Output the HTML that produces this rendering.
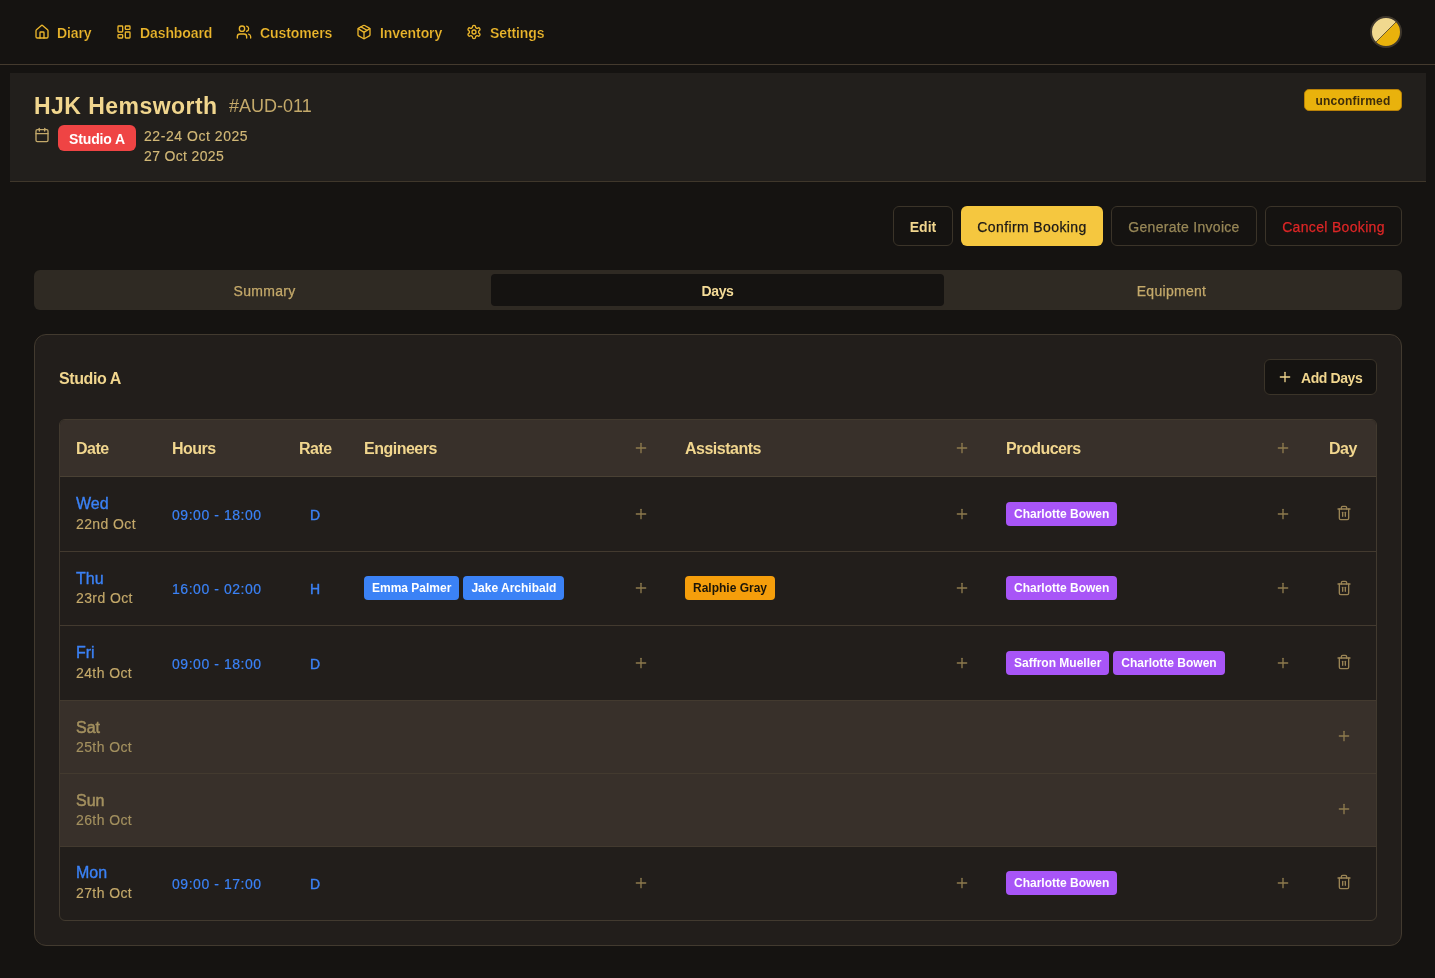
<!DOCTYPE html>
<html><head><meta charset="utf-8">
<style>
*{box-sizing:border-box;margin:0;padding:0}
html,body{width:1435px;height:978px;overflow:hidden;background:#151311;font-family:"Liberation Sans",sans-serif}
.a{will-change:transform}
.m{-webkit-text-stroke:0.25px currentColor}
.a{position:absolute;white-space:nowrap}
svg.i{position:absolute;fill:none;stroke:currentColor;stroke-width:2;stroke-linecap:round;stroke-linejoin:round}
.nav{position:absolute;left:0;top:0;width:1435px;height:65px;border-bottom:1px solid #443a2e}
.nt{font-size:14px;font-weight:700;color:#ebb62c;line-height:16px;top:25px;letter-spacing:-0.1px;-webkit-text-stroke:0.2px #151311}
.ni{width:16px;height:16px;top:24px;color:#ebb62c}
.th{top:21px;font-size:16px;font-weight:700;line-height:16px;letter-spacing:-0.5px;color:#f1d68e}
.dn{font-size:16px;line-height:22px;color:#3b82f6;-webkit-text-stroke:0.35px currentColor}
.dd{font-size:14px;line-height:20px;letter-spacing:0.4px;color:#c4a96a;margin-top:0.5px;-webkit-text-stroke:0.15px currentColor}
.wk{color:#a3905f}
.dn.wk{-webkit-text-stroke:0.5px currentColor}
.hr{font-size:14px;line-height:20px;color:#3b82f6;letter-spacing:0.55px;-webkit-text-stroke:0.2px currentColor}
.rt{width:30px;text-align:center;font-size:14px;line-height:20px;color:#3b82f6;-webkit-text-stroke:0.4px currentColor}
.bw{display:flex;gap:4px}
.b{display:inline-block;height:24px;padding:0 8px;border-radius:4px;font-size:12px;font-weight:700;line-height:25.6px;color:#fff}
.be{background:#3b82f6}.ba{background:#f59e0b;color:#1c1508}.bp{background:#a855f7}
</style></head><body>
<div class="nav">
  <svg class="i ni" style="left:34px" viewBox="0 0 24 24"><path d="M15 21v-8a1 1 0 0 0-1-1h-4a1 1 0 0 0-1 1v8"/><path d="M3 10a2 2 0 0 1 .709-1.528l7-5.999a2 2 0 0 1 2.582 0l7 5.999A2 2 0 0 1 21 10v9a2 2 0 0 1-2 2H5a2 2 0 0 1-2-2z"/></svg>
  <span class="a nt" style="left:57px">Diary</span>
  <svg class="i ni" style="left:116px" viewBox="0 0 24 24"><rect width="7" height="9" x="3" y="3" rx="1"/><rect width="7" height="5" x="14" y="3" rx="1"/><rect width="7" height="9" x="14" y="12" rx="1"/><rect width="7" height="5" x="3" y="16" rx="1"/></svg>
  <span class="a nt" style="left:140px">Dashboard</span>
  <svg class="i ni" style="left:235.5px" viewBox="0 0 24 24"><path d="M16 21v-2a4 4 0 0 0-4-4H6a4 4 0 0 0-4 4v2"/><circle cx="9" cy="7" r="4"/><path d="M22 21v-2a4 4 0 0 0-3-3.87"/><path d="M16 3.13a4 4 0 0 1 0 7.75"/></svg>
  <span class="a nt" style="left:260px">Customers</span>
  <svg class="i ni" style="left:355.5px" viewBox="0 0 24 24"><path d="M11 21.73a2 2 0 0 0 2 0l7-4A2 2 0 0 0 21 16V8a2 2 0 0 0-1-1.73l-7-4a2 2 0 0 0-2 0l-7 4A2 2 0 0 0 3 8v8a2 2 0 0 0 1 1.730z"/><path d="M12 22V12"/><path d="m3.3 7 7.703 4.734a2 2 0 0 0 1.994 0L20.7 7"/><path d="m7.5 4.270 9 5.15"/></svg>
  <span class="a nt" style="left:380px">Inventory</span>
  <svg class="i ni" style="left:466px" viewBox="0 0 24 24"><path d="M12.22 2h-.44a2 2 0 0 0-2 2v.18a2 2 0 0 1-1 1.73l-.43.25a2 2 0 0 1-2 0l-.15-.08a2 2 0 0 0-2.730.73l-.22.38a2 2 0 0 0 .73 2.730l.15.1a2 2 0 0 1 1 1.72v.51a2 2 0 0 1-1 1.74l-.15.09a2 2 0 0 0-.73 2.730l.22.38a2 2 0 0 0 2.730.73l.15-.08a2 2 0 0 1 2 0l.43.25a2 2 0 0 1 1 1.73V20a2 2 0 0 0 2 2h.44a2 2 0 0 0 2-2v-.18a2 2 0 0 1 1-1.73l.43-.25a2 2 0 0 1 2 0l.15.08a2 2 0 0 0 2.730-.73l.22-.39a2 2 0 0 0-.73-2.730l-.15-.08a2 2 0 0 1-1-1.74v-.5a2 2 0 0 1 1-1.74l.15-.09a2 2 0 0 0 .73-2.730l-.22-.38a2 2 0 0 0-2.730-.73l-.15.08a2 2 0 0 1-2 0l-.43-.25a2 2 0 0 1-1-1.73V4a2 2 0 0 0-2-2z"/><circle cx="12" cy="12" r="3"/></svg>
  <span class="a nt" style="left:490px">Settings</span>
  <div class="a" style="left:1370px;top:16px;width:32px;height:32px;border-radius:50%;border:2px solid #3e372d;overflow:hidden;background:linear-gradient(135deg,#f1d98f 0,#f1d98f 49%,#6b5a30 50%,#e9b20c 51%)"></div>
</div>

<!-- HEADER CARD -->
<div class="a" style="left:10px;top:73px;width:1416px;height:109px;background:#221f1c;border-bottom:1px solid #3f372b"></div>
<span class="a" style="left:34px;top:91.6px;font-size:23px;font-weight:700;line-height:28px;letter-spacing:0.45px;color:#f1d68e">HJK Hemsworth</span>
<span class="a" style="left:229px;top:95px;font-size:18px;line-height:22px;color:#c4a96a">#AUD-011</span>
<svg class="i" style="left:34px;top:127px;width:16px;height:16px;color:#c4a96a" viewBox="0 0 24 24"><path d="M8 2v4"/><path d="M16 2v4"/><rect width="18" height="18" x="3" y="4" rx="2"/><path d="M3 10h18"/></svg>
<div class="a" style="left:58px;top:125px;width:78px;height:26px;border-radius:6px;background:#ef4444;color:#fff;font-size:14px;font-weight:700;line-height:28.5px;letter-spacing:-0.15px;text-align:center">Studio A</div>
<span class="a" style="left:144px;top:126px;font-size:14px;line-height:20px;letter-spacing:0.55px;color:#d2b877;-webkit-text-stroke:0.15px currentColor">22-24 Oct 2025</span>
<span class="a" style="left:144px;top:145.5px;font-size:14px;line-height:20px;letter-spacing:0.35px;color:#d2b877;-webkit-text-stroke:0.15px currentColor">27 Oct 2025</span>
<div class="a" style="left:1304px;top:89px;width:98px;height:22px;border-radius:5px;background:#e9b20c;border:1px solid #b98108;color:#3d2c0a;font-size:12px;font-weight:700;line-height:22px;letter-spacing:0.2px;text-align:center">unconfirmed</div>

<!-- BUTTONS -->
<div class="a" style="left:893px;top:206px;width:60px;height:40px;border:1px solid #3b3429;border-radius:6px;background:#151311;color:#f1d68e;font-size:14px;font-weight:700;line-height:40px;text-align:center">Edit</div>
<div class="a" style="left:961px;top:206px;width:142px;height:40px;border-radius:6px;background:#f5c73f;color:#1c1917;font-size:14px;line-height:42px;letter-spacing:0.4px;text-align:center;-webkit-text-stroke:0.25px currentColor">Confirm Booking</div>
<div class="a" style="left:1111px;top:206px;width:146px;height:40px;border:1px solid #3b3429;border-radius:6px;background:#151311;color:#978757;font-size:14px;line-height:40px;letter-spacing:0.3px;text-align:center;-webkit-text-stroke:0.25px currentColor">Generate Invoice</div>
<div class="a" style="left:1265px;top:206px;width:137px;height:40px;border:1px solid #3b3429;border-radius:6px;background:#151311;color:#dc2626;font-size:14px;line-height:40px;letter-spacing:0.33px;text-align:center;-webkit-text-stroke:0.25px currentColor">Cancel Booking</div>

<!-- TABS -->
<div class="a" style="left:34px;top:270px;width:1368px;height:40px;border-radius:6px;background:#2f2a23"></div>
<div class="a" style="left:491px;top:274px;width:453px;height:32px;border-radius:4px;background:#151311"></div>
<span class="a" style="left:38px;top:283px;width:453px;text-align:center;font-size:14px;line-height:16px;letter-spacing:0.3px;color:#c4a96a;-webkit-text-stroke:0.25px currentColor">Summary</span>
<span class="a" style="left:491px;top:283px;width:453px;text-align:center;font-size:14px;font-weight:700;line-height:16px;letter-spacing:-0.4px;color:#f5dc98">Days</span>
<span class="a" style="left:945px;top:283px;width:453px;text-align:center;font-size:14px;line-height:16px;letter-spacing:0.3px;color:#c4a96a;-webkit-text-stroke:0.25px currentColor">Equipment</span>

<!-- CARD -->
<div class="a" style="left:34px;top:334px;width:1368px;height:612px;border:1px solid #423a2f;border-radius:12px;background:#221e1b"></div>
<span class="a" style="left:59px;top:369.5px;font-size:16px;font-weight:700;line-height:18px;letter-spacing:-0.4px;color:#f1d68e">Studio A</span>
<div class="a" style="left:1264px;top:359px;width:113px;height:36px;border:1px solid #3b3429;border-radius:6px;background:#151311"></div>
<svg class="i" style="left:1277px;top:369px;width:16px;height:16px;color:#f1d68e" viewBox="0 0 24 24"><path d="M5 12h14"/><path d="M12 5v14"/></svg>
<span class="a" style="left:1301px;top:370px;font-size:14px;font-weight:700;line-height:16px;letter-spacing:-0.4px;color:#f1d68e">Add Days</span>

<div id="tbl" class="a" style="left:59px;top:419px;width:1318px;height:502px;border:1px solid #423a2f;border-radius:6px;overflow:hidden">
<div class="a" style="left:0;top:0;width:1316px;height:56px;background:#38302a"></div>
<div class="a" style="left:0;top:56px;width:1316px;height:1px;background:#4a4134"></div>
<span class="a th" style="left:16px">Date</span>
<span class="a th" style="left:112px">Hours</span>
<span class="a th" style="left:239px">Rate</span>
<span class="a th" style="left:304px">Engineers</span>
<span class="a th" style="left:625px">Assistants</span>
<span class="a th" style="left:946px">Producers</span>
<span class="a th" style="left:1269px">Day</span>
<svg class="i pi" style="left:573px;top:20px;width:16px;height:16px;color:#8f7b4e" viewBox="0 0 24 24"><path d="M5 12h14"/><path d="M12 5v14"/></svg>
<svg class="i pi" style="left:894px;top:20px;width:16px;height:16px;color:#8f7b4e" viewBox="0 0 24 24"><path d="M5 12h14"/><path d="M12 5v14"/></svg>
<svg class="i pi" style="left:1215px;top:20px;width:16px;height:16px;color:#8f7b4e" viewBox="0 0 24 24"><path d="M5 12h14"/><path d="M12 5v14"/></svg>
<span class="a dn" style="left:16px;top:73px">Wed</span>
<span class="a dd" style="left:16px;top:93px">22nd Oct</span>
<span class="a hr" style="left:112px;top:85px">09:00 - 18:00</span>
<span class="a rt" style="left:240px;top:85px">D</span>
<div class="a bw" style="left:946px;top:82px"><span class="b bp">Charlotte Bowen</span></div>
<svg class="i pi" style="left:573px;top:86px;width:16px;height:16px;color:#8f7b4e" viewBox="0 0 24 24"><path d="M5 12h14"/><path d="M12 5v14"/></svg>
<svg class="i pi" style="left:894px;top:86px;width:16px;height:16px;color:#8f7b4e" viewBox="0 0 24 24"><path d="M5 12h14"/><path d="M12 5v14"/></svg>
<svg class="i pi" style="left:1215px;top:86px;width:16px;height:16px;color:#8f7b4e" viewBox="0 0 24 24"><path d="M5 12h14"/><path d="M12 5v14"/></svg>
<svg class="i pi" style="left:1276px;top:85px;width:16px;height:16px;color:#9a8455" viewBox="0 0 24 24"><path d="M3 6h18"/><path d="M19 6v14c0 1-1 2-2 2H7c-1 0-2-1-2-2V6"/><path d="M8 6V4c0-1 1-2 2-2h4c1 0 2 1 2 2v2"/><line x1="10" x2="10" y1="11" y2="17"/><line x1="14" x2="14" y1="11" y2="17"/></svg>
<div class="a" style="left:0;top:131px;width:1316px;height:1px;background:#433a2f"></div>
<span class="a dn" style="left:16px;top:148px">Thu</span>
<span class="a dd" style="left:16px;top:167px">23rd Oct</span>
<span class="a hr" style="left:112px;top:159px">16:00 - 02:00</span>
<span class="a rt" style="left:240px;top:159px">H</span>
<div class="a bw" style="left:304px;top:156px"><span class="b be">Emma Palmer</span><span class="b be">Jake Archibald</span></div>
<div class="a bw" style="left:625px;top:156px"><span class="b ba">Ralphie Gray</span></div>
<div class="a bw" style="left:946px;top:156px"><span class="b bp">Charlotte Bowen</span></div>
<svg class="i pi" style="left:573px;top:160px;width:16px;height:16px;color:#8f7b4e" viewBox="0 0 24 24"><path d="M5 12h14"/><path d="M12 5v14"/></svg>
<svg class="i pi" style="left:894px;top:160px;width:16px;height:16px;color:#8f7b4e" viewBox="0 0 24 24"><path d="M5 12h14"/><path d="M12 5v14"/></svg>
<svg class="i pi" style="left:1215px;top:160px;width:16px;height:16px;color:#8f7b4e" viewBox="0 0 24 24"><path d="M5 12h14"/><path d="M12 5v14"/></svg>
<svg class="i pi" style="left:1276px;top:160px;width:16px;height:16px;color:#9a8455" viewBox="0 0 24 24"><path d="M3 6h18"/><path d="M19 6v14c0 1-1 2-2 2H7c-1 0-2-1-2-2V6"/><path d="M8 6V4c0-1 1-2 2-2h4c1 0 2 1 2 2v2"/><line x1="10" x2="10" y1="11" y2="17"/><line x1="14" x2="14" y1="11" y2="17"/></svg>
<div class="a" style="left:0;top:205px;width:1316px;height:1px;background:#433a2f"></div>
<span class="a dn" style="left:16px;top:222px">Fri</span>
<span class="a dd" style="left:16px;top:242px">24th Oct</span>
<span class="a hr" style="left:112px;top:234px">09:00 - 18:00</span>
<span class="a rt" style="left:240px;top:234px">D</span>
<div class="a bw" style="left:946px;top:231px"><span class="b bp">Saffron Mueller</span><span class="b bp">Charlotte Bowen</span></div>
<svg class="i pi" style="left:573px;top:235px;width:16px;height:16px;color:#8f7b4e" viewBox="0 0 24 24"><path d="M5 12h14"/><path d="M12 5v14"/></svg>
<svg class="i pi" style="left:894px;top:235px;width:16px;height:16px;color:#8f7b4e" viewBox="0 0 24 24"><path d="M5 12h14"/><path d="M12 5v14"/></svg>
<svg class="i pi" style="left:1215px;top:235px;width:16px;height:16px;color:#8f7b4e" viewBox="0 0 24 24"><path d="M5 12h14"/><path d="M12 5v14"/></svg>
<svg class="i pi" style="left:1276px;top:234px;width:16px;height:16px;color:#9a8455" viewBox="0 0 24 24"><path d="M3 6h18"/><path d="M19 6v14c0 1-1 2-2 2H7c-1 0-2-1-2-2V6"/><path d="M8 6V4c0-1 1-2 2-2h4c1 0 2 1 2 2v2"/><line x1="10" x2="10" y1="11" y2="17"/><line x1="14" x2="14" y1="11" y2="17"/></svg>
<div class="a" style="left:0;top:280px;width:1316px;height:1px;background:#433a2f"></div>
<div class="a" style="left:0;top:281px;width:1316px;height:72px;background:#38302a"></div>
<span class="a dn wk" style="left:16px;top:297px">Sat</span>
<span class="a dd wk" style="left:16px;top:316px">25th Oct</span>
<svg class="i pi" style="left:1276px;top:308px;width:16px;height:16px;color:#8f7b4e" viewBox="0 0 24 24"><path d="M5 12h14"/><path d="M12 5v14"/></svg>
<div class="a" style="left:0;top:353px;width:1316px;height:1px;background:#433a2f"></div>
<div class="a" style="left:0;top:354px;width:1316px;height:72px;background:#38302a"></div>
<span class="a dn wk" style="left:16px;top:370px">Sun</span>
<span class="a dd wk" style="left:16px;top:389px">26th Oct</span>
<svg class="i pi" style="left:1276px;top:381px;width:16px;height:16px;color:#8f7b4e" viewBox="0 0 24 24"><path d="M5 12h14"/><path d="M12 5v14"/></svg>
<div class="a" style="left:0;top:426px;width:1316px;height:1px;background:#433a2f"></div>
<span class="a dn" style="left:16px;top:442px">Mon</span>
<span class="a dd" style="left:16px;top:462px">27th Oct</span>
<span class="a hr" style="left:112px;top:454px">09:00 - 17:00</span>
<span class="a rt" style="left:240px;top:454px">D</span>
<div class="a bw" style="left:946px;top:451px"><span class="b bp">Charlotte Bowen</span></div>
<svg class="i pi" style="left:573px;top:455px;width:16px;height:16px;color:#8f7b4e" viewBox="0 0 24 24"><path d="M5 12h14"/><path d="M12 5v14"/></svg>
<svg class="i pi" style="left:894px;top:455px;width:16px;height:16px;color:#8f7b4e" viewBox="0 0 24 24"><path d="M5 12h14"/><path d="M12 5v14"/></svg>
<svg class="i pi" style="left:1215px;top:455px;width:16px;height:16px;color:#8f7b4e" viewBox="0 0 24 24"><path d="M5 12h14"/><path d="M12 5v14"/></svg>
<svg class="i pi" style="left:1276px;top:454px;width:16px;height:16px;color:#9a8455" viewBox="0 0 24 24"><path d="M3 6h18"/><path d="M19 6v14c0 1-1 2-2 2H7c-1 0-2-1-2-2V6"/><path d="M8 6V4c0-1 1-2 2-2h4c1 0 2 1 2 2v2"/><line x1="10" x2="10" y1="11" y2="17"/><line x1="14" x2="14" y1="11" y2="17"/></svg>
</div>
</body></html>
